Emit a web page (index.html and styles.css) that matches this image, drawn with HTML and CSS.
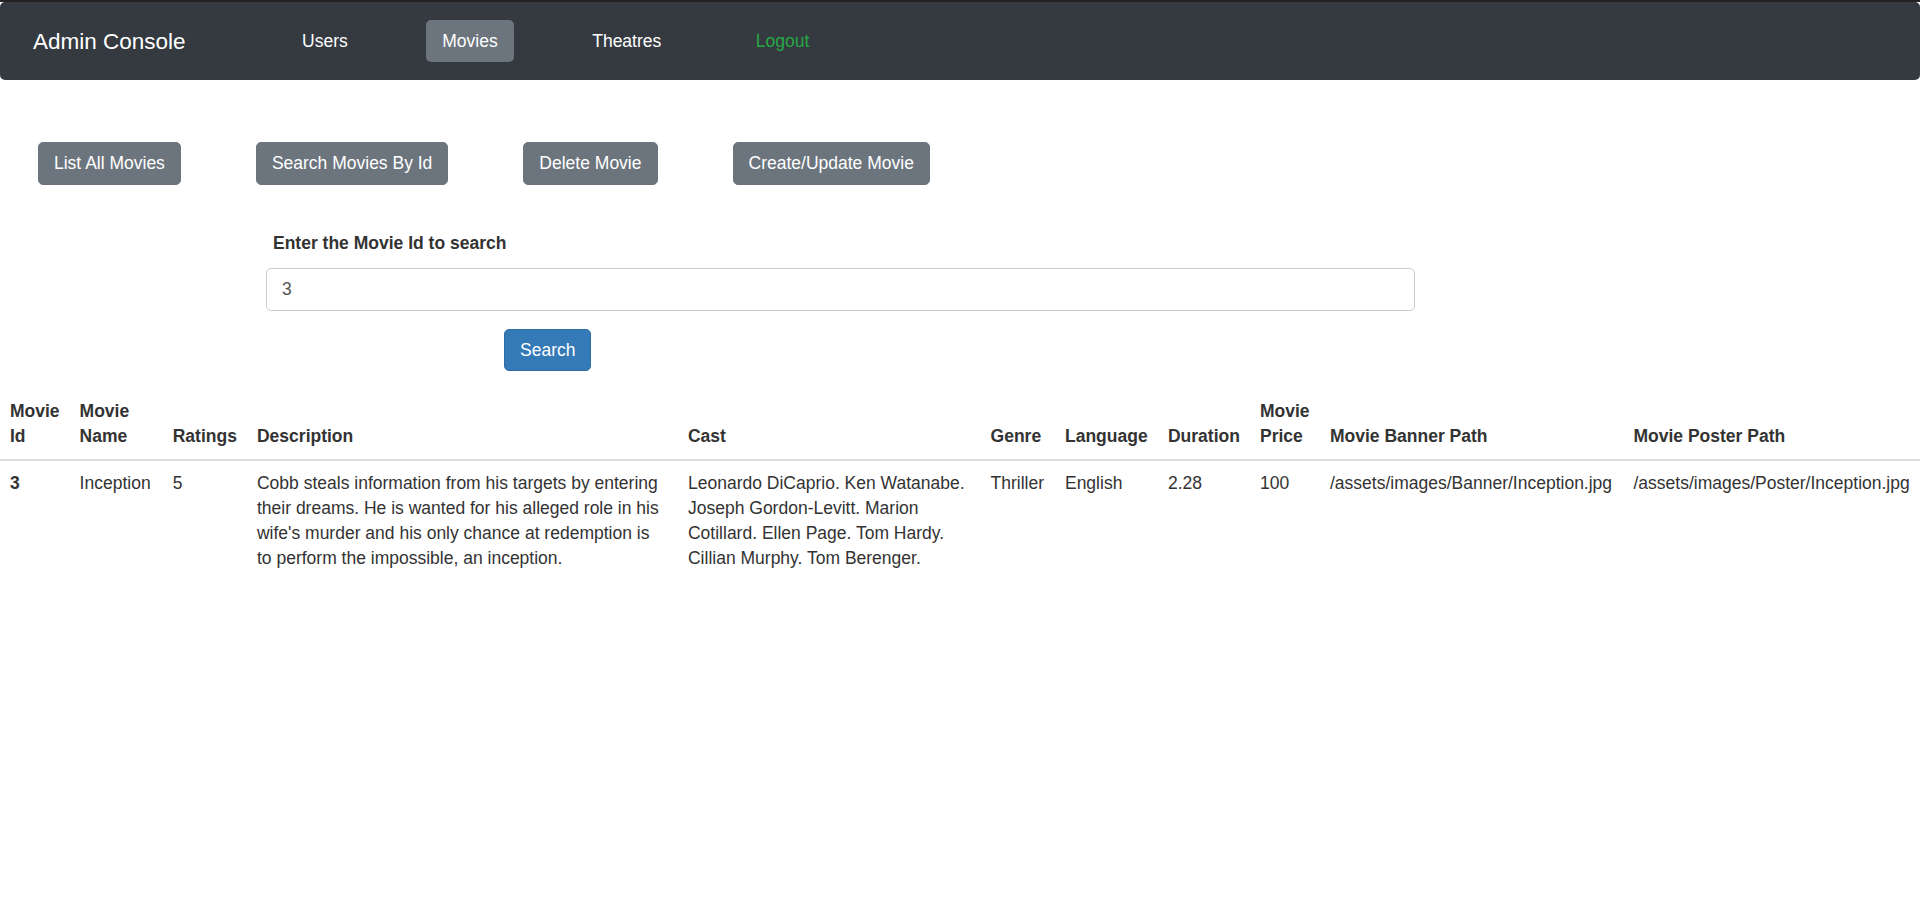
FILE: index.html
```html
<!DOCTYPE html>
<html lang="en">
<head>
<meta charset="utf-8">
<title>Admin Console</title>
<link rel="stylesheet" href="styles.css">
</head>
<body>
<div class="topline"></div>
<nav class="navbar">
  <span class="brand">Admin Console</span>
  <ul class="nav">
    <li><a class="nav-link" href="#">Users</a></li>
    <li><a class="nav-link active" href="#">Movies</a></li>
    <li><a class="nav-link" href="#">Theatres</a></li>
    <li><a class="nav-link logout" href="#">Logout</a></li>
  </ul>
</nav>
<main>
  <div class="actions">
    <button class="btn btn-secondary" type="button">List All Movies</button>
    <button class="btn btn-secondary" type="button">Search Movies By Id</button>
    <button class="btn btn-secondary" type="button">Delete Movie</button>
    <button class="btn btn-secondary" type="button">Create/Update Movie</button>
  </div>
  <form class="search-form">
    <label class="search-label" for="movieId">Enter the Movie Id to search</label>
    <input class="search-input" id="movieId" type="text" value="3">
    <button class="btn btn-primary search-btn" type="button">Search</button>
  </form>
  <table class="movies">
    <colgroup>
      <col class="c-id">
      <col class="c-name">
      <col class="c-rating">
      <col class="c-desc">
      <col class="c-cast">
      <col class="c-genre">
      <col class="c-lang">
      <col class="c-dur">
      <col class="c-price">
      <col class="c-banner">
      <col class="c-poster">
    </colgroup>
    <thead>
      <tr>
        <th>Movie Id</th>
        <th>Movie Name</th>
        <th>Ratings</th>
        <th>Description</th>
        <th>Cast</th>
        <th>Genre</th>
        <th>Language</th>
        <th>Duration</th>
        <th>Movie Price</th>
        <th>Movie Banner Path</th>
        <th>Movie Poster Path</th>
      </tr>
    </thead>
    <tbody>
      <tr>
        <th scope="row">3</th>
        <td>Inception</td>
        <td>5</td>
        <td>Cobb steals information from his targets by entering their dreams. He is wanted for his alleged role in his wife's murder and his only chance at redemption is to perform the impossible, an inception.</td>
        <td>Leonardo DiCaprio. Ken Watanabe. Joseph Gordon-Levitt. Marion Cotillard. Ellen Page. Tom Hardy. Cillian Murphy. Tom Berenger.</td>
        <td>Thriller</td>
        <td>English</td>
        <td>2.28</td>
        <td>100</td>
        <td>/assets/images/Banner/Inception.jpg</td>
        <td>/assets/images/Poster/Inception.jpg</td>
      </tr>
    </tbody>
  </table>
</main>
</body>
</html>
```

FILE: styles.css
```css
html, body {
  margin: 0;
  padding: 0;
  background: #ffffff;
}

body {
  font-family: "Liberation Sans", Arial, Helvetica, sans-serif;
  font-size: 17.5px;
  line-height: 25px;
  color: #333333;
}

.topline {
  height: 2px;
  background: #222222;
}

.navbar {
  display: flex;
  align-items: center;
  height: 78px;
  padding-left: 33px;
  background: #343a40;
  border-radius: 5px;
}

.brand {
  font-size: 22.5px;
  line-height: 25px;
  color: #ffffff;
}

.nav {
  display: flex;
  gap: 62.5px;
  list-style: none;
  margin: 0 0 0 100.5px;
  padding: 0;
}

.nav-link {
  display: block;
  padding: 8.5px 16px;
  line-height: 25px;
  border-radius: 5px;
  color: #ffffff;
  text-decoration: none;
}

.nav-link.active {
  background: #6c757d;
}

.nav-link.logout {
  color: #28a745;
}

.actions {
  display: flex;
  gap: 75px;
  margin-top: 62px;
  padding-left: 38px;
}

.btn {
  box-sizing: border-box;
  height: 43px;
  padding: 0 15px;
  border: 1px solid transparent;
  border-radius: 5px;
  font-family: inherit;
  font-size: 17.5px;
  line-height: 41px;
  color: #ffffff;
  cursor: pointer;
}

.btn-secondary {
  background: #6c757d;
  border-color: #6c757d;
}

.btn-primary {
  background: #337ab7;
  border-color: #2e6da4;
}

.search-form {
  width: 1149px;
  margin: 45.5px 0 0 266px;
}

.search-label {
  display: block;
  padding-left: 7px;
  margin-bottom: 12.5px;
  font-weight: bold;
}

.search-input {
  display: block;
  box-sizing: border-box;
  width: 100%;
  height: 43px;
  padding: 0 15px;
  border: 1px solid #cccccc;
  border-radius: 5px;
  font-family: inherit;
  font-size: 17.5px;
  color: #555555;
  background: #ffffff;
}

.search-btn {
  display: block;
  height: 42px;
  line-height: 40px;
  margin: 18px 0 0 238px;
}

.movies {
  width: 100%;
  table-layout: fixed;
  margin-top: 17.5px;
  border-collapse: collapse;
}

.c-id { width: 69.6px; }
.c-name { width: 93.1px; }
.c-rating { width: 84.3px; }
.c-desc { width: 431px; }
.c-cast { width: 302.6px; }
.c-genre { width: 74.4px; }
.c-lang { width: 103px; }
.c-dur { width: 92px; }
.c-price { width: 70px; }
.c-banner { width: 303.5px; }
.c-poster { width: 296.5px; }

.movies th,
.movies td {
  padding: 10px;
  line-height: 25px;
  text-align: left;
  vertical-align: top;
  white-space: normal;
}

.movies thead th {
  vertical-align: bottom;
  border-bottom: 2.5px solid #dddddd;
}

.movies tbody th,
.movies tbody td {
  border-top: 1px solid #dddddd;
}
```
